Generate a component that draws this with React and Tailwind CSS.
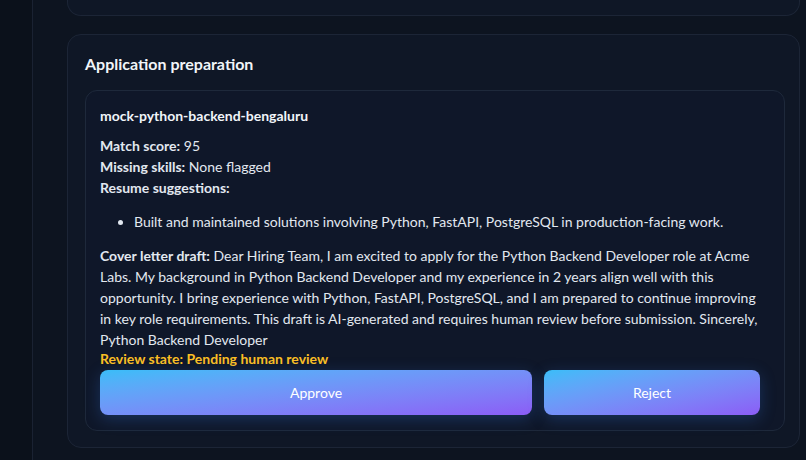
export default function App() {
  return (
    <div className="w-[806px] h-[460px] overflow-hidden bg-[#0d1420] flex" style={{fontFamily:'Lato, sans-serif'}}>
      <div className="w-[33px] shrink-0 bg-[#0b111b] border-r border-[#1a2232]"></div>
      <div className="flex-1 pl-[34px] pr-[6px] flex flex-col gap-[18px] -mt-[30px]">
        <div className="h-[46px] rounded-b-[14px] rounded-t-none border border-t-0 border-[#1c2536] bg-[#0f1726]"></div>
        <div className="rounded-[14px] border border-[#1c2536] bg-[#0f1726] pl-[17px] pr-[14px] pt-[17px] pb-[16px]">
          <h2 className="text-[16px] font-bold text-[#f1f5f9] leading-[24px]">Application preparation</h2>
          <div className="mt-[14px] rounded-[12px] border border-[#1e293b] bg-[#0f1729] px-[14px] pt-[14px] pb-[15px] text-[14px] text-[#e2e8f0] leading-[21px]">
            <div className="font-bold text-[#f1f5f9]">mock-python-backend-bengaluru</div>
            <div className="mt-[9px]"><b>Match score:</b> 95</div>
            <div><b>Missing skills:</b> None flagged</div>
            <div><b>Resume suggestions:</b></div>
            <ul className="list-disc pl-[34px] mt-[13px] mb-[13px]">
              <li>Built and maintained solutions involving Python, FastAPI, PostgreSQL in production-facing work.</li>
            </ul>
            <p><b>Cover letter draft:</b> Dear Hiring Team, I am excited to apply for the Python Backend Developer role at Acme Labs. My background in Python Backend Developer and my experience in 2 years align well with this opportunity. I bring experience with Python, FastAPI, PostgreSQL, and I am prepared to continue improving in key role requirements. This draft is AI-generated and requires human review before submission. Sincerely, Python Backend Developer</p>
            <div className="font-bold text-[#fbbf24] leading-[18px]">Review state: Pending human review</div>
            <div className="flex gap-[12px] mt-[2px] pr-[10px]">
              <button className="flex-[2] h-[45px] rounded-[8px] bg-gradient-to-br from-[#38bdf8] to-[#8b5cf6] text-white text-[14px] shadow-[0_4px_16px_rgba(56,130,246,0.25)]">Approve</button>
              <button className="flex-1 h-[45px] rounded-[8px] bg-gradient-to-br from-[#38bdf8] to-[#8b5cf6] text-white text-[14px] shadow-[0_4px_16px_rgba(56,130,246,0.25)]">Reject</button>
            </div>
          </div>
        </div>
      </div>
    </div>
  );
}
